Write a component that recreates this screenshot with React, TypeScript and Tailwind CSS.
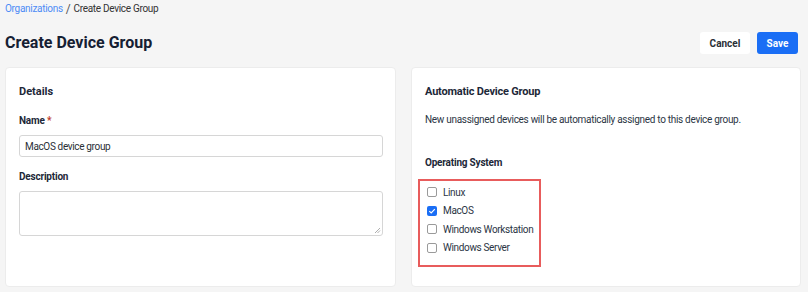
import React from "react";

function Check({ checked, label }: { checked?: boolean; label: string }) {
  return (
    <div className="flex items-center h-[18.5px]">
      <div className="shrink-0 w-[10px] h-[10px] flex">
        {checked ? (
          <div className="w-[10px] h-[10px] rounded-[2px] bg-[#1a6ef5] flex items-center justify-center">
            <svg width="8" height="8" viewBox="0 0 8 8">
              <path d="M1.3 4.1 L3.2 5.9 L6.8 2.1" stroke="#fff" strokeWidth="1.2" fill="none" />
            </svg>
          </div>
        ) : (
          <div className="w-[10px] h-[10px] rounded-[2px] border border-[#9a9a9a] bg-white" />
        )}
      </div>
      <span className="ml-[6px] text-[10px] text-[#2b3544] whitespace-nowrap tracking-[-0.35px]">{label}</span>
    </div>
  );
}

export default function App() {
  return (
    <div
      className="w-[808px] h-[292px] bg-[#f5f5f5] overflow-hidden px-[5px]"
      style={{ fontFamily: "Roboto, 'Liberation Sans', sans-serif" }}
    >
      <div className="pt-[2px] h-[16px] text-[10px] leading-[14px] flex items-center tracking-[-0.3px]">
        <span className="text-[#4d8cf5]">Organizations</span>
        <span className="mx-[3px] text-[#555] text-[12px]">/</span>
        <span className="text-[#333]">Create Device Group</span>
      </div>
      <div className="flex items-center justify-between h-[22px] mt-[16px]">
        <h1 className="text-[16px] font-bold text-[#152033] leading-[22px]">Create Device Group</h1>
        <div className="flex gap-[7px] mr-[5px]">
          <button className="w-[50px] h-[22px] rounded-[3px] bg-white text-[10px] font-bold text-[#2a2f36]">
            Cancel
          </button>
          <button className="w-[41px] h-[22px] rounded-[3px] bg-[#1a6ef5] text-[10px] font-bold text-white">
            Save
          </button>
        </div>
      </div>
      <div className="flex gap-[15px] mt-[13px]">
        <div className="w-[391px] h-[220px] bg-white rounded-[4px] border border-[#ececec] px-[13px] pt-[16px]">
          <div className="text-[11px] leading-[16px] font-bold text-[#1d2838]">Details</div>
          <div className="mt-[14px] text-[10px] leading-[14px] font-bold text-[#1d2838] tracking-[-0.2px]">
            Name <span className="text-[#c0392b]">*</span>
          </div>
          <div className="mt-[7px] h-[22px] rounded-[3px] border border-[#d6d6d6] flex items-center px-[5px] text-[10px] text-[#2a2f36] w-[364px] tracking-[-0.35px]">
            MacOS device group
          </div>
          <div className="mt-[13px] text-[10px] leading-[14px] font-bold text-[#1d2838] tracking-[-0.2px]">Description</div>
          <div className="mt-[7px] h-[45px] w-[364px] rounded-[3px] border border-[#d6d6d6] relative">
            <svg className="absolute right-[1px] bottom-[1px]" width="7" height="7" viewBox="0 0 7 7">
              <path d="M6 1 L1 6 M6 3.5 L3.5 6" stroke="#999" strokeWidth="0.8" />
            </svg>
          </div>
        </div>
        <div className="w-[390px] h-[220px] bg-white rounded-[4px] border border-[#ececec] px-[13px] pt-[16px]">
          <div className="text-[11px] leading-[16px] font-bold text-[#1d2838] tracking-[-0.2px]">Automatic Device Group</div>
          <div className="mt-[13px] text-[10px] leading-[14px] text-[#2b3544] tracking-[-0.3px]">
            New unassigned devices will be automatically assigned to this device group.
          </div>
          <div className="mt-[29px] text-[10px] leading-[14px] font-bold text-[#1d2838] tracking-[-0.2px]">Operating System</div>
          <div className="mt-[9px] -ml-[7px] w-[123px] h-[88px] border-2 border-[#e85c5c] pl-[7px] pt-[2px]">
            <Check label="Linux" />
            <Check checked label="MacOS" />
            <Check label="Windows Workstation" />
            <Check label="Windows Server" />
          </div>
        </div>
      </div>
    </div>
  );
}
